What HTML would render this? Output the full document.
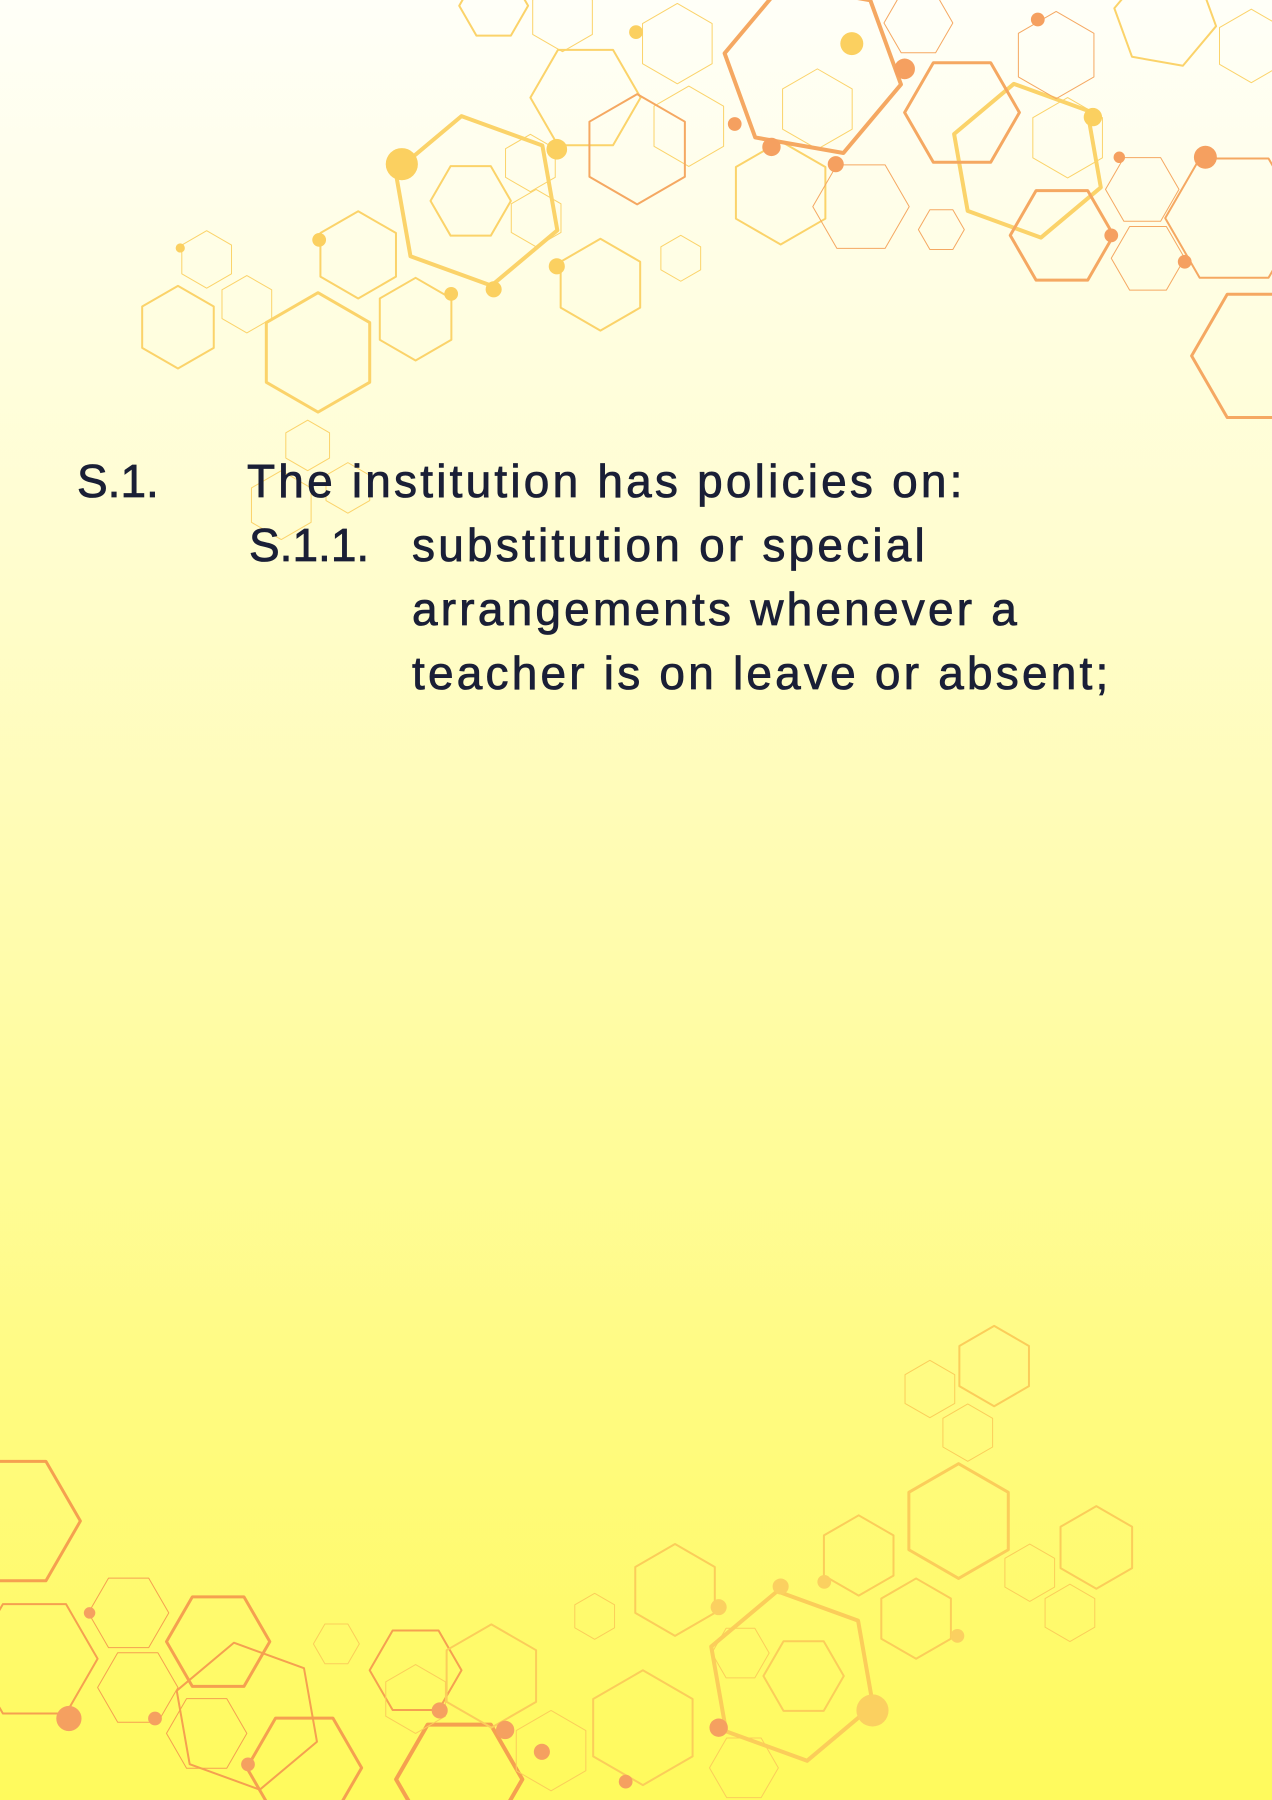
<!DOCTYPE html>
<html><head><meta charset="utf-8"><style>
html,body{margin:0;padding:0}
body{width:1272px;height:1800px;position:relative;overflow:hidden;
background:linear-gradient(180deg,#fffff8 0%,#fffdd0 30%,#fffca8 55%,#fffb80 78%,#fffa5c 100%);
font-family:"Liberation Sans",sans-serif;color:#1a1f36}
svg{position:absolute;left:0;top:0}
.t{position:absolute;font-size:46px;line-height:1;white-space:nowrap;letter-spacing:3.2px;-webkit-text-stroke:0.8px #1a1f36}
</style></head><body>
<svg width="1272" height="1800" viewBox="0 0 1108 1568">
<defs><polygon id="h" points="1,0 0.5,0.866 -0.5,0.866 -1,0 -0.5,-0.866 0.5,-0.866" vector-effect="non-scaling-stroke"/></defs>
<g fill="none" stroke-linejoin="round">
<g stroke="#fbd36a" stroke-width="2">
<use href="#h" transform="translate(415,175) rotate(20) scale(75)" stroke-width="4"/>
<use href="#h" transform="translate(410,175) scale(35)"/>
<use href="#h" transform="translate(277,307) rotate(30) scale(52)" stroke-width="3"/>
<use href="#h" transform="translate(155,285) rotate(30) scale(36)"/>
<use href="#h" transform="translate(180,226) rotate(30) scale(25)" stroke-width="1"/>
<use href="#h" transform="translate(215,265) rotate(30) scale(25)" stroke-width="1"/>
<use href="#h" transform="translate(312,222) rotate(30) scale(38)"/>
<use href="#h" transform="translate(362,278) rotate(30) scale(36)"/>
<use href="#h" transform="translate(523,248) rotate(30) scale(40)"/>
<use href="#h" transform="translate(467,190) rotate(30) scale(25)" stroke-width="1"/>
<use href="#h" transform="translate(462,142) rotate(30) scale(25)" stroke-width="1"/>
<use href="#h" transform="translate(510,85) scale(48)"/>
<use href="#h" transform="translate(590,38) rotate(30) scale(35)" stroke-width="1"/>
<use href="#h" transform="translate(600,110) rotate(30) scale(35)" stroke-width="1"/>
<use href="#h" transform="translate(712,95) rotate(30) scale(35)" stroke-width="1"/>
<use href="#h" transform="translate(680,168) rotate(30) scale(45)"/>
<use href="#h" transform="translate(895,140) rotate(20) scale(68)" stroke-width="4"/>
<use href="#h" transform="translate(930,120) rotate(30) scale(35)" stroke-width="1"/>
<use href="#h" transform="translate(1090,40) rotate(30) scale(32)" stroke-width="1"/>
<use href="#h" transform="translate(490,15) rotate(30) scale(30)" stroke-width="1"/>
<use href="#h" transform="translate(430,5) scale(30)"/>
<use href="#h" transform="translate(593,225) rotate(30) scale(20)" stroke-width="1"/>
<use href="#h" transform="translate(268,388) rotate(30) scale(22)" stroke-width="1"/>
<use href="#h" transform="translate(245,440) rotate(30) scale(30)" stroke-width="1"/>
<use href="#h" transform="translate(303,425) rotate(30) scale(22)" stroke-width="1"/>
<use href="#h" transform="translate(1015,15) rotate(10) scale(45)"/>
</g>
<g stroke="#f5a862" stroke-width="2">
<use href="#h" transform="translate(555,130) rotate(30) scale(48)"/>
<use href="#h" transform="translate(708,60) rotate(10) scale(78)" stroke-width="4"/>
<use href="#h" transform="translate(750,180) rotate(0) scale(42)" stroke-width="1"/>
<use href="#h" transform="translate(800,20) scale(30)" stroke-width="1"/>
<use href="#h" transform="translate(838,98) scale(50)" stroke-width="3"/>
<use href="#h" transform="translate(920,48) rotate(30) scale(38)" stroke-width="1"/>
<use href="#h" transform="translate(925,205) scale(45)" stroke-width="3"/>
<use href="#h" transform="translate(995,165) scale(32)" stroke-width="1"/>
<use href="#h" transform="translate(1000,225) scale(32)" stroke-width="1"/>
<use href="#h" transform="translate(1075,190) scale(60)" stroke-width="2"/>
<use href="#h" transform="translate(1100,310) scale(62)" stroke-width="3"/>
<use href="#h" transform="translate(820,200) scale(20)" stroke-width="1"/>
</g>
<g stroke="#f5a050" stroke-width="3">
<use href="#h" transform="translate(10,1325) scale(60)"/>
<use href="#h" transform="translate(30,1445) scale(55)" stroke-width="2"/>
<use href="#h" transform="translate(190,1430) scale(45)"/>
<use href="#h" transform="translate(215,1495) rotate(20) scale(65)" stroke-width="2"/>
<use href="#h" transform="translate(265,1540) scale(50)"/>
<use href="#h" transform="translate(362,1455) scale(40)" stroke-width="2"/>
<use href="#h" transform="translate(400,1550) scale(55)" stroke-width="4"/>
<use href="#h" transform="translate(112,1405) scale(35)" stroke-width="1"/>
<use href="#h" transform="translate(120,1470) scale(35)" stroke-width="1"/>
<use href="#h" transform="translate(180,1510) scale(35)" stroke-width="1"/>
</g>
<g stroke="#fbcd5a" stroke-width="2">
<use href="#h" transform="translate(293,1432) scale(20)" stroke-width="1"/>
<use href="#h" transform="translate(428,1460) rotate(30) scale(45)"/>
<use href="#h" transform="translate(480,1525) rotate(30) scale(35)" stroke-width="1"/>
<use href="#h" transform="translate(560,1505) rotate(30) scale(50)"/>
<use href="#h" transform="translate(588,1385) rotate(30) scale(40)"/>
<use href="#h" transform="translate(690,1460) rotate(20) scale(75)" stroke-width="4"/>
<use href="#h" transform="translate(700,1460) scale(35)"/>
<use href="#h" transform="translate(645,1440) scale(25)" stroke-width="1"/>
<use href="#h" transform="translate(648,1540) scale(30)" stroke-width="1"/>
<use href="#h" transform="translate(748,1355) rotate(30) scale(35)"/>
<use href="#h" transform="translate(798,1410) rotate(30) scale(35)"/>
<use href="#h" transform="translate(835,1325) rotate(30) scale(50)" stroke-width="3"/>
<use href="#h" transform="translate(866,1190) rotate(30) scale(35)"/>
<use href="#h" transform="translate(810,1210) rotate(30) scale(25)" stroke-width="1"/>
<use href="#h" transform="translate(843,1248) rotate(30) scale(25)" stroke-width="1"/>
<use href="#h" transform="translate(897,1370) rotate(30) scale(25)" stroke-width="1"/>
<use href="#h" transform="translate(932,1405) rotate(30) scale(25)" stroke-width="1"/>
<use href="#h" transform="translate(955,1348) rotate(30) scale(36)"/>
<use href="#h" transform="translate(518,1408) rotate(30) scale(20)" stroke-width="1"/>
<use href="#h" transform="translate(362,1480) rotate(30) scale(30)" stroke-width="1"/>
</g>
</g>
<g fill="#fbd060">
<circle cx="350" cy="143" r="14"/><circle cx="485" cy="130" r="9"/><circle cx="430" cy="252" r="7"/>
<circle cx="742" cy="38" r="10"/><circle cx="952" cy="102" r="8"/><circle cx="278" cy="209" r="6"/>
<circle cx="393" cy="256" r="6"/><circle cx="485" cy="232" r="7"/><circle cx="554" cy="28" r="6"/>
<circle cx="760" cy="1490" r="14"/><circle cx="626" cy="1400" r="7"/><circle cx="680" cy="1382" r="7"/>
<circle cx="834" cy="1425" r="6"/><circle cx="718" cy="1378" r="6"/><circle cx="157" cy="216" r="4"/>
</g>
<g fill="#f5a060">
<circle cx="1050" cy="137" r="10"/><circle cx="788" cy="60" r="9"/><circle cx="672" cy="128" r="8"/>
<circle cx="728" cy="143" r="7"/><circle cx="904" cy="17" r="6"/><circle cx="640" cy="108" r="6"/>
<circle cx="968" cy="205" r="6"/><circle cx="1032" cy="228" r="6"/><circle cx="975" cy="137" r="5"/>
<circle cx="60" cy="1497" r="11"/><circle cx="440" cy="1507" r="8"/><circle cx="383" cy="1490" r="7"/>
<circle cx="472" cy="1526" r="7"/><circle cx="545" cy="1552" r="6"/><circle cx="216" cy="1537" r="6"/>
<circle cx="135" cy="1497" r="6"/><circle cx="78" cy="1405" r="5"/><circle cx="626" cy="1505" r="8"/>
</g>
</svg>
<div class="t" style="left:77px;top:458px;letter-spacing:0">S.1.</div>
<div class="t" style="left:247px;top:458px">The institution has policies on:</div>
<div class="t" style="left:249px;top:522px;letter-spacing:0">S.1.1.</div>
<div class="t" style="left:412px;top:522px">substitution or special</div>
<div class="t" style="left:412px;top:586px">arrangements whenever a</div>
<div class="t" style="left:412px;top:650px">teacher is on leave or absent;</div>
</body></html>
